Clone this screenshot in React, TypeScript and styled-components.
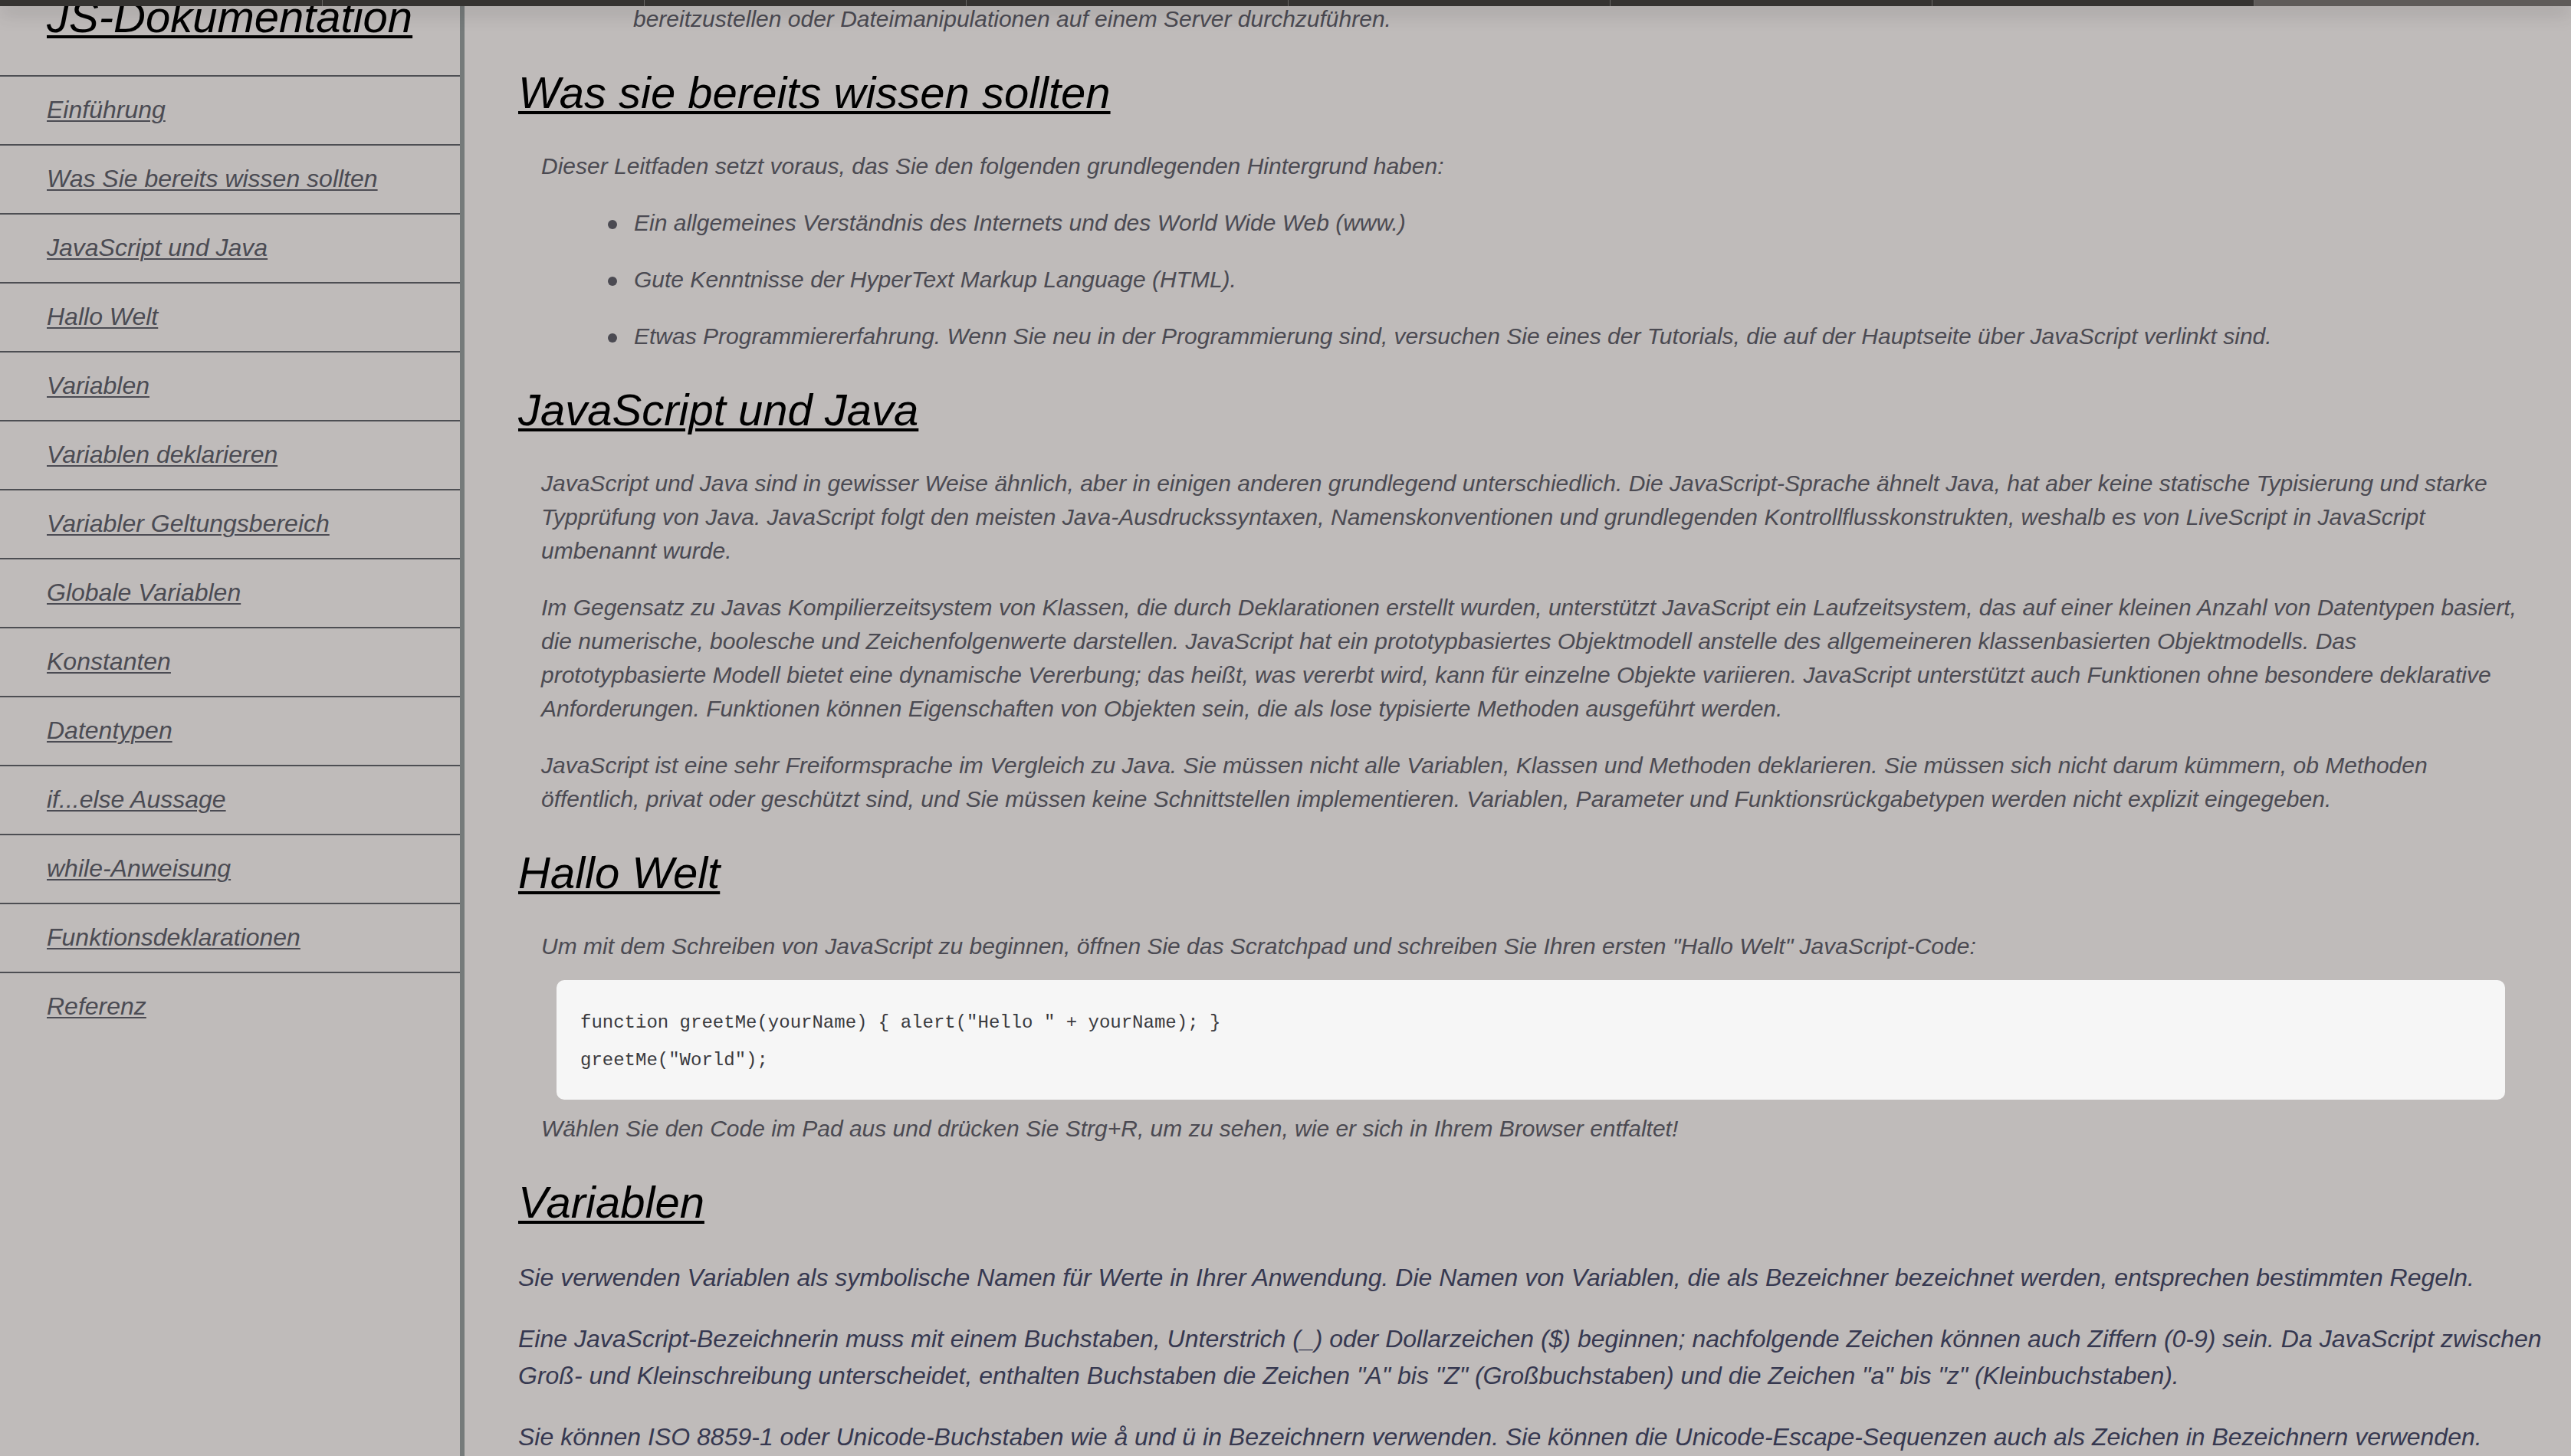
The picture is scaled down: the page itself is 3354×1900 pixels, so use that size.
import styled, { createGlobalStyle } from "styled-components";

const GlobalStyle = createGlobalStyle`
  html, body {
    margin: 0;
    padding: 0;
    background: #bfbbba;
    overflow: hidden;
  }
  * {
    box-sizing: border-box;
  }
`;

const navItems = [
  "Einführung",
  "Was Sie bereits wissen sollten",
  "JavaScript und Java",
  "Hallo Welt",
  "Variablen",
  "Variablen deklarieren",
  "Variabler Geltungsbereich",
  "Globale Variablen",
  "Konstanten",
  "Datentypen",
  "if...else Aussage",
  "while-Anweisung",
  "Funktionsdeklarationen",
  "Referenz",
];

const App = () => {
  return (
    <>
      <GlobalStyle />
      <TopBar>
        {Array.from({ length: 8 }).map((_, i) => (
          <Tab key={i} $active={i === 7} />
        ))}
      </TopBar>
      <Layout>
        <Sidebar>
          <NavTitle>JS-Dokumentation</NavTitle>
          <NavList>
            {navItems.map((item) => (
              <NavItem key={item}>
                <NavLink href="#">{item}</NavLink>
              </NavItem>
            ))}
          </NavList>
        </Sidebar>

        <Main>
          <Indented>
            <Fragment>bereitzustellen oder Dateimanipulationen auf einem Server durchzuführen.</Fragment>
          </Indented>

          <Heading>Was sie bereits wissen sollten</Heading>
          <Indented>
            <Para>Dieser Leitfaden setzt voraus, das Sie den folgenden grundlegenden Hintergrund haben:</Para>
            <BulletList>
              <li>Ein allgemeines Verständnis des Internets und des World Wide Web (www.)</li>
              <li>Gute Kenntnisse der HyperText Markup Language (HTML).</li>
              <li>
                Etwas Programmiererfahrung. Wenn Sie neu in der Programmierung sind, versuchen Sie eines der
                Tutorials, die auf der Hauptseite über JavaScript verlinkt sind.
              </li>
            </BulletList>
          </Indented>

          <Heading>JavaScript und Java</Heading>
          <Indented>
            <Para>
              JavaScript und Java sind in gewisser Weise ähnlich, aber in einigen anderen grundlegend
              unterschiedlich. Die JavaScript-Sprache ähnelt Java, hat aber keine statische Typisierung und starke
              Typprüfung von Java. JavaScript folgt den meisten Java-Ausdruckssyntaxen, Namenskonventionen und
              grundlegenden Kontrollflusskonstrukten, weshalb es von LiveScript in JavaScript umbenannt wurde.
            </Para>
            <Para>
              Im Gegensatz zu Javas Kompilierzeitsystem von Klassen, die durch Deklarationen erstellt wurden,
              unterstützt JavaScript ein Laufzeitsystem, das auf einer kleinen Anzahl von Datentypen basiert, die
              numerische, boolesche und Zeichenfolgenwerte darstellen. JavaScript hat ein prototypbasiertes
              Objektmodell anstelle des allgemeineren klassenbasierten Objektmodells. Das prototypbasierte Modell
              bietet eine dynamische Vererbung; das heißt, was vererbt wird, kann für einzelne Objekte variieren.
              JavaScript unterstützt auch Funktionen ohne besondere deklarative Anforderungen. Funktionen können
              Eigenschaften von Objekten sein, die als lose typisierte Methoden ausgeführt werden.
            </Para>
            <Para>
              JavaScript ist eine sehr Freiformsprache im Vergleich zu Java. Sie müssen nicht alle Variablen,
              Klassen und Methoden deklarieren. Sie müssen sich nicht darum kümmern, ob Methoden öffentlich, privat
              oder geschützt sind, und Sie müssen keine Schnittstellen implementieren. Variablen, Parameter und
              Funktionsrückgabetypen werden nicht explizit eingegeben.
            </Para>
          </Indented>

          <Heading>Hallo Welt</Heading>
          <Indented>
            <Para $mb={22}>
              Um mit dem Schreiben von JavaScript zu beginnen, öffnen Sie das Scratchpad und schreiben Sie Ihren
              ersten "Hallo Welt" JavaScript-Code:
            </Para>
            <CodeBlock>
              <CodeLine>{'function greetMe(yourName) { alert("Hello " + yourName); }'}</CodeLine>
              <CodeLine>{'greetMe("World");'}</CodeLine>
            </CodeBlock>
            <Para $mt={16}>
              Wählen Sie den Code im Pad aus und drücken Sie Strg+R, um zu sehen, wie er sich in Ihrem Browser
              entfaltet!
            </Para>
          </Indented>

          <Heading>Variablen</Heading>
          <LargePara>
            Sie verwenden Variablen als symbolische Namen für Werte in Ihrer Anwendung. Die Namen von Variablen,
            die als Bezeichner bezeichnet werden, entsprechen bestimmten Regeln.
          </LargePara>
          <LargePara>
            Eine JavaScript-Bezeichnerin muss mit einem Buchstaben, Unterstrich (_) oder Dollarzeichen ($)
            beginnen; nachfolgende Zeichen können auch Ziffern (0-9) sein. Da JavaScript zwischen Groß- und
            Kleinschreibung unterscheidet, enthalten Buchstaben die Zeichen "A" bis "Z" (Großbuchstaben) und die
            Zeichen "a" bis "z" (Kleinbuchstaben).
          </LargePara>
          <LargePara>
            Sie können ISO 8859-1 oder Unicode-Buchstaben wie å und ü in Bezeichnern verwenden. Sie können die
            Unicode-Escape-Sequenzen auch als Zeichen in Bezeichnern verwenden.
          </LargePara>
        </Main>
      </Layout>
    </>
  );
};

const TopBar = styled.div`
  position: fixed;
  top: 0;
  left: 0;
  right: 0;
  height: 8px;
  display: flex;
  z-index: 10;
  box-shadow: 0 6px 26px rgba(0, 0, 0, 0.28);
`;

const Tab = styled.div<{ $active: boolean }>`
  flex: 0 0 420px;
  height: 100%;
  background: ${({ $active }) => ($active ? "#5f5b59" : "#353331")};
  & + & {
    border-left: 1px solid #6a6866;
  }
  &:last-child {
    flex: 1;
  }
`;

const Layout = styled.div`
  display: flex;
  height: 100vh;
  font-family: "Liberation Sans", Arial, sans-serif;
  font-style: italic;
`;

const Sidebar = styled.nav`
  flex: 0 0 606px;
  height: 100%;
  border-right: 6px solid #767b7b;
  background: #bfbbba;
`;

const NavTitle = styled.div`
  padding: 2px 0 56px 61px;
  font-size: 58px;
  line-height: 40px;
  color: #000;
  text-decoration: underline;
  text-decoration-thickness: 4px;
  text-underline-offset: 4px;
  white-space: nowrap;
`;

const NavList = styled.ul`
  list-style: none;
  margin: 0;
  padding: 0;
`;

const NavItem = styled.li`
  border-top: 2px solid #4d4e53;
  padding: 24px 0 26px 61px;
  font-size: 32px;
  line-height: 38px;
`;

const NavLink = styled.a`
  color: #4b4b53;
  text-decoration: underline;
  text-decoration-thickness: 2px;
  text-underline-offset: 3px;
`;

const Main = styled.main`
  flex: 1;
  min-width: 0;
  height: 100%;
  overflow: hidden;
  padding: 3px 20px 0 70px;
`;

const Indented = styled.div`
  margin: 0 46px 0 30px;
`;

const Heading = styled.h2`
  margin: 41px 0;
  font-size: 58px;
  line-height: 66px;
  font-weight: normal;
  color: #000;
  text-decoration: underline;
  text-decoration-thickness: 4px;
  text-underline-offset: 4px;
`;

const Para = styled.p<{ $mt?: number; $mb?: number }>`
  margin: ${({ $mt }) => ($mt ?? 30) + "px"} 0 ${({ $mb }) => ($mb ?? 30) + "px"};
  font-size: 30px;
  line-height: 44px;
  color: #4b4a52;
`;

const Fragment = styled(Para)`
  margin-top: 0;
  padding-left: 120px;
`;

const BulletList = styled.ul`
  margin: 0;
  padding-left: 121px;
  list-style: none;
  font-size: 30px;
  line-height: 44px;
  color: #4b4a52;
  li {
    position: relative;
    margin: 30px 0;
  }
  li::before {
    content: "";
    position: absolute;
    left: -34px;
    top: 18px;
    width: 12px;
    height: 12px;
    border-radius: 50%;
    background: #4b4a52;
  }
`;

const CodeBlock = styled.pre`
  margin: 0 20px;
  padding: 31px 31px 27px;
  background: #f6f6f6;
  border-radius: 10px;
  font-family: "Liberation Mono", "Courier New", monospace;
  font-style: normal;
  font-size: 24px;
  line-height: 49px;
  color: #3a3a3e;
`;

const CodeLine = styled.code`
  display: block;
  font-family: inherit;
`;

const LargePara = styled.p`
  margin: 32px 0;
  font-size: 32px;
  line-height: 48px;
  color: #363850;
`;

export default App;
